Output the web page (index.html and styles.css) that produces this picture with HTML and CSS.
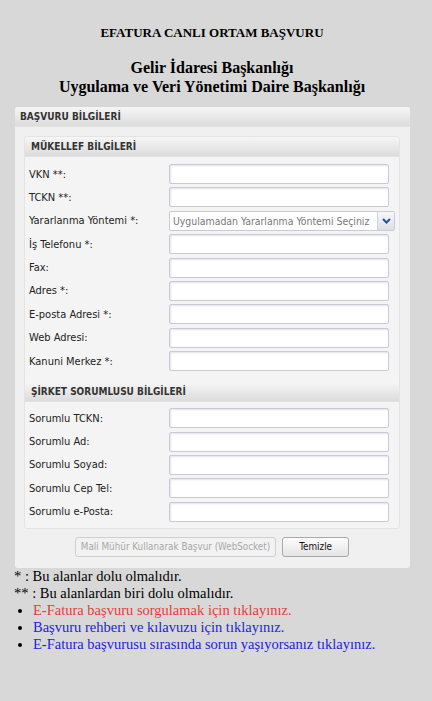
FILE: index.html
```html
<!DOCTYPE html>
<html>
<head>
  <title>EFATURA CANLI ORTAM BAŞVURU</title>
  <link rel="stylesheet" href="styles.css">
</head>
<body>
  <div class="page">
    <h1>EFATURA CANLI ORTAM BAŞVURU</h1>
    <h2>Gelir İdaresi Başkanlığı<br>Uygulama ve Veri Yönetimi Daire Başkanlığı</h2>

    <div class="panel">
      <div class="panel-head">BAŞVURU BİLGİLERİ</div>
      <div class="panel-body">
        <div class="box">
          <div class="box-head">MÜKELLEF BİLGİLERİ</div>
          <div class="rows">
            <label>VKN **:</label><input type="text">
            <label>TCKN **:</label><input type="text">
            <label>Yararlanma Yöntemi *:</label>
            <div class="select">
              <span>Uygulamadan Yararlanma Yöntemi Seçiniz</span>
              <span class="arrow">
                <svg width="9" height="6" viewBox="0 0 9 6"><path d="M1 1 L4.5 4.5 L8 1" fill="none" stroke="#2a4f9e" stroke-width="2"/></svg>
              </span>
            </div>
            <label>İş Telefonu *:</label><input type="text">
            <label>Fax:</label><input type="text">
            <label>Adres *:</label><input type="text">
            <label>E-posta Adresi *:</label><input type="text">
            <label>Web Adresi:</label><input type="text">
            <label>Kanuni Merkez *:</label><input type="text">
          </div>
          <div class="box-head">ŞİRKET SORUMLUSU BİLGİLERİ</div>
          <div class="rows last">
            <label>Sorumlu TCKN:</label><input type="text">
            <label>Sorumlu Ad:</label><input type="text">
            <label>Sorumlu Soyad:</label><input type="text">
            <label>Sorumlu Cep Tel:</label><input type="text">
            <label>Sorumlu e-Posta:</label><input type="text">
          </div>
        </div>
        <div class="actions">
          <button class="btn" disabled>Mali Mühür Kullanarak Başvur (WebSocket)</button>
          <button class="btn">Temizle</button>
        </div>
      </div>
    </div>

    <div class="notes">
      <p>* : Bu alanlar dolu olmalıdır.</p>
      <p>** : Bu alanlardan biri dolu olmalıdır.</p>
      <ul>
        <li><a class="red" href="#">E-Fatura başvuru sorgulamak için tıklayınız.</a></li>
        <li><a href="#">Başvuru rehberi ve kılavuzu için tıklayınız.</a></li>
        <li><a href="#">E-Fatura başvurusu sırasında sorun yaşıyorsanız tıklayınız.</a></li>
      </ul>
    </div>
  </div>
</body>
</html>
```

FILE: styles.css
```css
body {
  margin: 0;
  background: #d8d8d8;
  font-family: "Liberation Serif", serif;
}
.page {
  width: 396px;
  padding: 25px 0 0 14px;
}
h1 {
  margin: 0;
  font-size: 13px;
  line-height: 15px;
  text-align: center;
}
h2 {
  margin: 18px 0 0;
  font-size: 16px;
  line-height: 19px;
  text-align: center;
}
.panel {
  margin: 11px 0 0 1px;
  width: 395px;
  background: #f0f0f0;
  border-radius: 3px;
  font-family: "DejaVu Sans Condensed", "DejaVu Sans", sans-serif;
}
.panel-head,
.box-head {
  height: 19px;
  line-height: 19px;
  font-size: 10px;
  font-weight: bold;
  color: #333;
  background: linear-gradient(#f6f6f6, #dcdcdc);
  border-bottom: 1px solid #e2e2e2;
  border-radius: 3px 3px 0 0;
}
.panel-head {
  padding-left: 5px;
}
.panel-body {
  padding: 9px 10px 11px 9px;
}
.box {
  background: #f4f4f4;
  border: 1px solid #e4e4e4;
  border-radius: 3px;
}
.box-head {
  padding-left: 6px;
}
.rows {
  display: grid;
  grid-template-columns: 140px 226px;
  grid-auto-rows: 20px;
  row-gap: 3.4px;
  align-items: center;
  padding: 7px 0 11px 4px;
}
.rows.last {
  padding: 6px 0 6px 4px;
}
label {
  font-size: 11px;
  color: #222;
}
input {
  box-sizing: border-box;
  width: 220px;
  height: 20px;
  margin: 0;
  border: 1px solid #c9c9d8;
  border-radius: 2px;
  background: #fff;
  box-shadow: inset 1px 1px 2px #e2e2ea;
}
.select {
  display: flex;
  height: 20px;
  box-sizing: border-box;
  border: 1px solid #c9c9d8;
  border-radius: 2px;
  background: #fff;
  font-size: 10.4px;
  color: #777;
}
.select span:first-child {
  flex: 1;
  padding-left: 3px;
  line-height: 18px;
  white-space: nowrap;
  overflow: hidden;
}
.arrow {
  width: 16px;
  display: flex;
  align-items: center;
  justify-content: center;
  border-left: 1px solid #d0d0dc;
  background: linear-gradient(#f8f8f8, #dedee6);
}
.actions {
  display: flex;
  justify-content: center;
  gap: 6px;
  margin-top: 8px;
}
.btn {
  height: 20px;
  padding: 0 5px;
  font-family: "DejaVu Sans Condensed", "DejaVu Sans", sans-serif;
  font-size: 9.8px;
  color: #111;
  background: linear-gradient(#fdfdfd, #e4e4e4);
  border: 1px solid #a9a9a9;
  border-radius: 3px;
}
.btn:last-child {
  width: 67px;
}
.btn:disabled {
  color: #a8a8a8;
  border-color: #cfcfcf;
  background: #f2f2f2;
}
.notes {
  font-size: 14.5px;
  line-height: 17px;
}
.notes p {
  margin: 0;
}
.notes ul {
  margin: 0;
  padding-left: 19px;
}
.notes a {
  color: #2222dd;
  text-decoration: none;
}
.notes a.red {
  color: #e63b3b;
}
```
